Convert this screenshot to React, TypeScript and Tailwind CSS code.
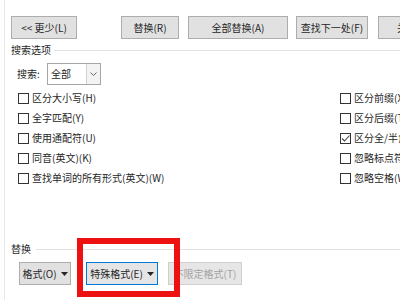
import React from "react";

const Btn = ({
  children,
  w,
  className = "",
}: {
  children: React.ReactNode;
  w: string;
  className?: string;
}) => (
  <div
    className={`flex h-full shrink-0 items-center justify-center border border-[#adadad] bg-[#e1e1e1] ${w} ${className}`}
  >
    {children}
  </div>
);

const Arrow = ({ color = "#262626" }: { color?: string }) => (
  <svg width="7" height="4" viewBox="0 0 7 4" className="ml-[4px]">
    <path d="M0 0 H7 L3.5 4 Z" fill={color} />
  </svg>
);

const Check = ({ label, checked = false }: { label: string; checked?: boolean }) => (
  <div className="flex h-[20px] items-center whitespace-nowrap">
    <div className="relative mr-[3px] h-[11px] w-[11px] shrink-0 border border-[#333] bg-white">
      {checked && (
        <svg width="11" height="11" viewBox="0 0 11 11" className="absolute left-[-1px] top-[-1px]">
          <path d="M2 5.5 L4.5 8 L9.5 2.5" stroke="#444" strokeWidth="1.1" fill="none" />
        </svg>
      )}
    </div>
    <span>{label}</span>
  </div>
);

export default function App() {
  return (
    <div
      className="relative h-[300px] w-[400px] overflow-hidden bg-white text-[10px] leading-none text-[#262626]"
      style={{ fontFamily: '"Noto Sans CJK SC", "Noto Sans", sans-serif' }}
    >
      <div className="h-full pl-[4px]">
        <div className="flex h-full flex-col border-l border-[#e8e8e8] pl-[6px]">
          {/* top buttons */}
          <div className="mt-[16px] flex h-[23px]">
            <Btn w="w-[66px]">&lt;&lt; 更少(L)</Btn>
            <Btn w="w-[58px]" className="ml-[44px]">替换(R)</Btn>
            <Btn w="w-[100px]" className="ml-[9px]">全部替换(A)</Btn>
            <Btn w="w-[72px]" className="ml-[8px]">查找下一处(F)</Btn>
            <Btn w="w-[58px]" className="ml-[10px]">关闭</Btn>
          </div>

          {/* search options label */}
          <div className="mt-[5px] flex h-[12px] items-center">
            <span className="whitespace-nowrap">搜索选项</span>
            <div className="ml-[3px] h-px flex-1 bg-[#e3e3e3]" />
          </div>

          {/* search select */}
          <div className="ml-[6px] mt-[7px] flex h-[22px] items-center">
            <span className="w-[30px] whitespace-nowrap">搜索:</span>
            <div className="flex h-full w-[54px] border border-[#a6a6a6] bg-white">
              <div className="flex flex-1 items-center pl-[3px]">全部</div>
              <div className="flex w-[14px] items-center justify-center border-l border-[#d0d0d0] bg-[#f3f3f3]">
                <svg width="7" height="4" viewBox="0 0 7 4">
                  <path d="M0.5 0.5 L3.5 3.5 L6.5 0.5" stroke="#666" strokeWidth="1" fill="none" />
                </svg>
              </div>
            </div>
          </div>

          {/* checkboxes */}
          <div className="mt-[3px] flex">
            <div className="w-[329px] shrink-0 pl-[7px]">
              <Check label="区分大小写(H)" />
              <Check label="全字匹配(Y)" />
              <Check label="使用通配符(U)" />
              <Check label="同音(英文)(K)" />
              <Check label="查找单词的所有形式(英文)(W)" />
            </div>
            <div className="shrink-0">
              <Check label="区分前缀(X)" />
              <Check label="区分后缀(T)" />
              <Check label="区分全/半角(M)" checked />
              <Check label="忽略标点符号(S)" />
              <Check label="忽略空格(W)" />
            </div>
          </div>

          {/* replace section */}
          <div className="mt-[55px] flex h-[12px] items-center">
            <span className="whitespace-nowrap">替换</span>
            <div className="ml-[5px] h-px flex-1 bg-[#e3e3e3]" />
          </div>

          <div className="ml-[8px] mt-[7px] flex h-[23px]">
            <Btn w="w-[52px]">
              格式(O)
              <Arrow />
            </Btn>
            <Btn w="w-[72px]" className="ml-[15px] !border-[#0078d7] !bg-[#e5e5e5]">
              特殊格式(E)
              <Arrow />
            </Btn>
            <Btn w="w-[74px]" className="ml-[10px] !border-[#cfcfcf] !bg-[#e6e6e6] text-[#a3a3a3]">
              不限定格式(T)
            </Btn>
          </div>
        </div>
      </div>

      {/* red highlight box */}
      <div className="absolute left-[77px] top-[238px] h-[59px] w-[103px] border-[6px] border-[#ee1111]" />
    </div>
  );
}
